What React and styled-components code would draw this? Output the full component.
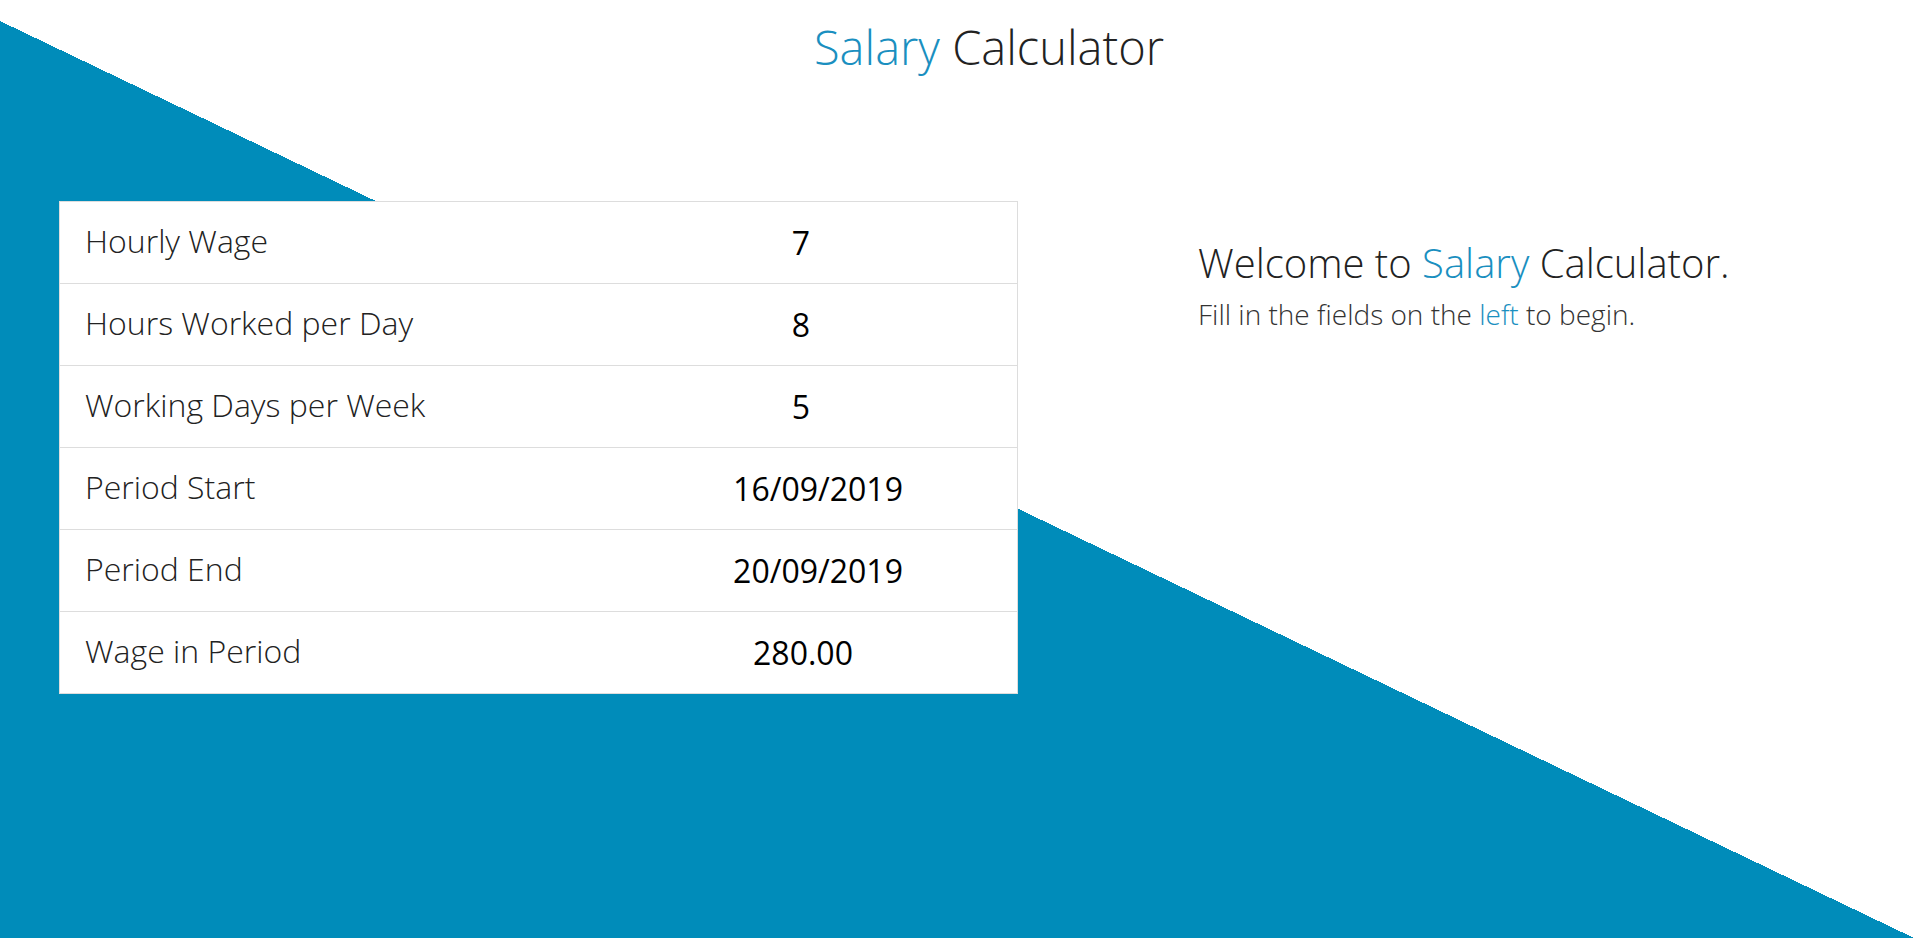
import styled, { createGlobalStyle } from "styled-components";

const GlobalStyle = createGlobalStyle`
  html, body {
    margin: 0;
    padding: 0;
    background: #ffffff;
    font-family: "Open Sans", "Liberation Sans", sans-serif;
    color: #222222;
  }
`;

const Page = styled.div`
  height: 100vh;
  box-sizing: border-box;
  overflow: hidden;
  background-image: linear-gradient(to top right, #008cba 50%, transparent 50%);
  background-repeat: no-repeat;
  background-position: 0 21px;
  background-size: 100% calc(100% - 21px);
`;

const Title = styled.h1`
  margin: 0;
  padding: 16px 0 0 64px;
  font-size: 47px;
  font-weight: 300;
  line-height: 62px;
  text-align: center;
  color: #222222;
`;

const Accent = styled.span`
  color: #1a8fc0;
`;

const Main = styled.div`
  display: flex;
  align-items: flex-start;
  padding: 123px 0 0 59px;
`;

const Table = styled.table`
  width: 959px;
  border-collapse: collapse;
  background: #ffffff;
  border: 1px solid #dddddd;
`;

const Row = styled.tr`
  border-top: 1px solid #dddddd;
`;

const Label = styled.td`
  width: 500px;
  height: 77px;
  padding: 0 0 4px 25px;
  font-size: 32px;
  font-weight: 300;
  color: #222222;
  vertical-align: middle;
`;

const Value = styled.td`
  padding: 0 0 0 ${(p) => p.$shift || 0}px;
  font-size: 32px;
  font-weight: 400;
  color: #000000;
  text-align: center;
  vertical-align: middle;
`;

const Welcome = styled.div`
  margin: 35px 0 0 180px;
`;

const WelcomeHeading = styled.h2`
  margin: 0;
  font-size: 40px;
  font-weight: 300;
  line-height: 54px;
  color: #222222;
`;

const WelcomeText = styled.p`
  margin: 4px 0 0;
  font-size: 28px;
  font-weight: 300;
  line-height: 40px;
  color: #333333;
`;

const rows = [
  { label: "Hourly Wage", value: "7" },
  { label: "Hours Worked per Day", value: "8" },
  { label: "Working Days per Week", value: "5" },
  { label: "Period Start", value: "16/09/2019", shift: 34 },
  { label: "Period End", value: "20/09/2019", shift: 34 },
  { label: "Wage in Period", value: "280.00", shift: 4 },
];

function App() {
  return (
    <>
      <GlobalStyle />
      <Page>
        <Title>
          <Accent>Salary</Accent> Calculator
        </Title>
        <Main>
          <Table>
            <tbody>
              {rows.map((r) => (
                <Row key={r.label}>
                  <Label>{r.label}</Label>
                  <Value $shift={r.shift}>{r.value}</Value>
                </Row>
              ))}
            </tbody>
          </Table>
          <Welcome>
            <WelcomeHeading>
              Welcome to <Accent>Salary</Accent> Calculator.
            </WelcomeHeading>
            <WelcomeText>
              Fill in the fields on the <Accent>left</Accent> to begin.
            </WelcomeText>
          </Welcome>
        </Main>
      </Page>
    </>
  );
}

export default App;
